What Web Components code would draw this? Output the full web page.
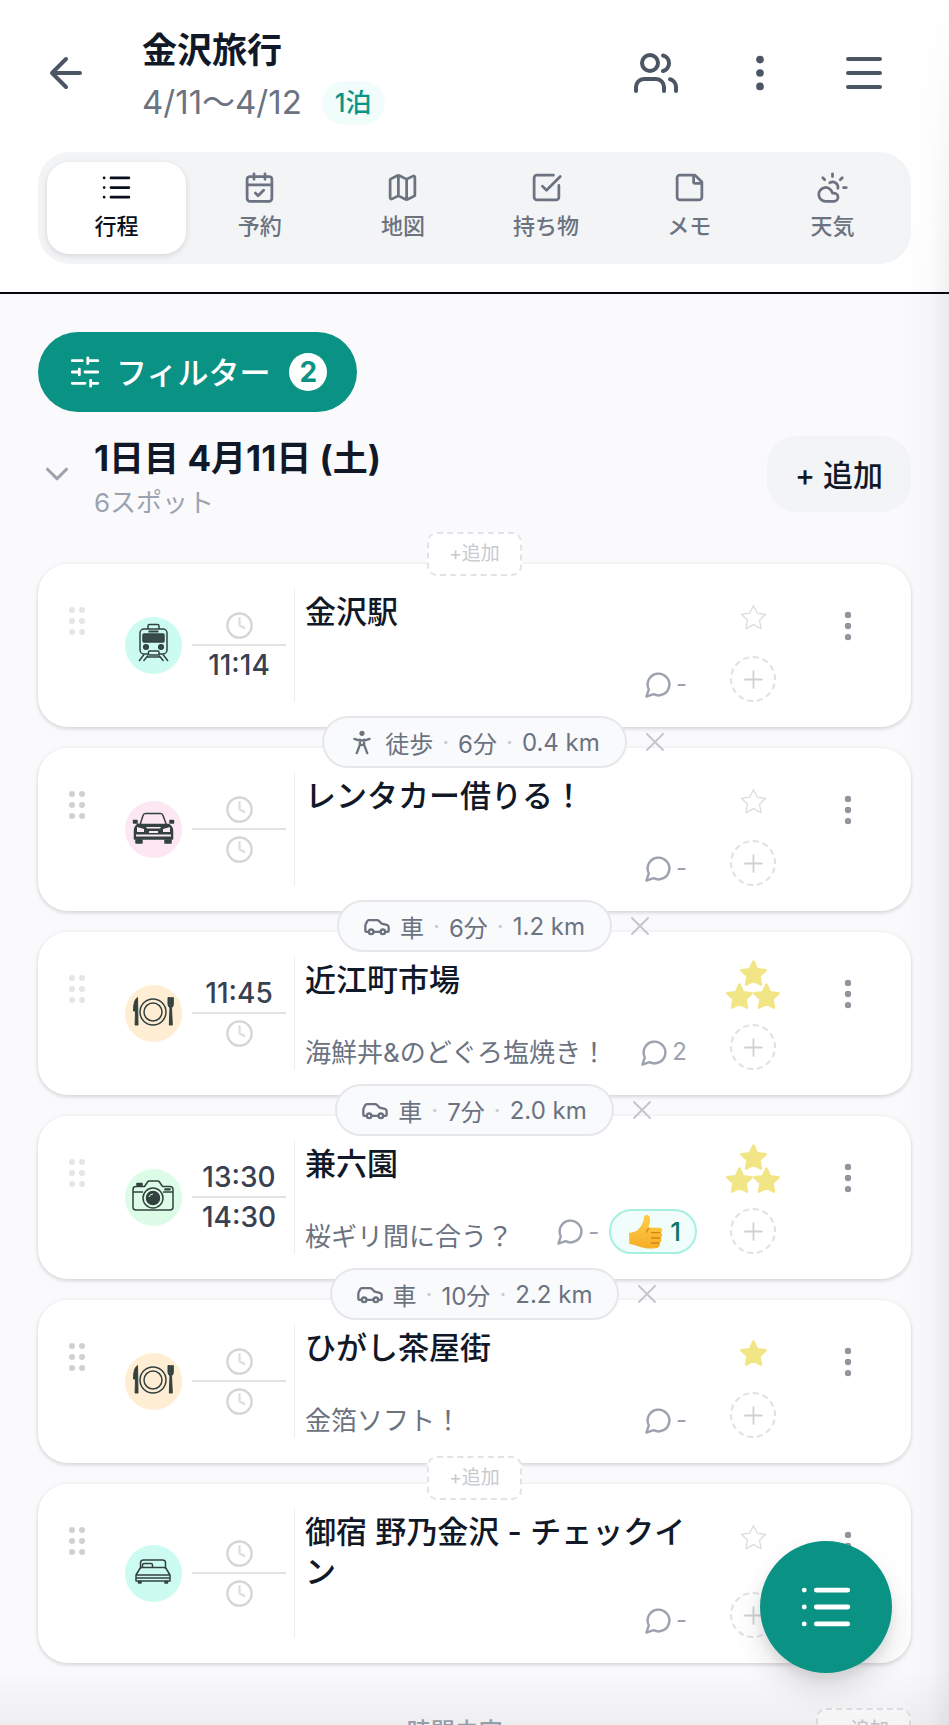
<!DOCTYPE html>
<html lang="ja">
<head>
<meta charset="utf-8">
<meta name="viewport" content="width=device-width, initial-scale=1">
<title>金沢旅行</title>
<style>
  html, body {
    margin: 0;
    height: 100%;
    overflow: hidden;
  }
  body {
    background: #fafafc;
    color: #111827;
    font-family: Inter, "Noto Sans CJK JP", sans-serif;
  }
</style>
</head>
<body>
<trip-app></trip-app>

<script>
const ICONS = {
  back: '<path d="m12 19-7-7 7-7M19 12H5"/>',
  more: '<g fill="currentColor" stroke="none"><circle cx="12" cy="5" r="2"/><circle cx="12" cy="12" r="2"/><circle cx="12" cy="19" r="2"/></g>',
  menu: '<path d="M4 5h16M4 12h16M4 19h16"/>',
  list: '<path d="M3 5h.01M3 12h.01M3 19h.01M8 5h13M8 12h13M8 19h13"/>',
  calendar: '<path d="M8 2v4M16 2v4M3 10h18m-12 6 2 2 4-4"/><rect x="3" y="4" width="18" height="18" rx="2"/>',
  map: '<path d="M14.1 5.55a2 2 0 0 0 1.8 0l3.65-1.83A1 1 0 0 1 21 4.62v12.76a1 1 0 0 1-.55.9l-4.55 2.27a2 2 0 0 1-1.8 0l-4.2-2.1a2 2 0 0 0-1.8 0l-3.65 1.83A1 1 0 0 1 3 19.38V6.62a1 1 0 0 1 .55-.9L8.1 3.45a2 2 0 0 1 1.8 0zM15 5.76v15M9 3.24v15"/>',
  check: '<path d="M21 10.5V19a2 2 0 0 1-2 2H5a2 2 0 0 1-2-2V5a2 2 0 0 1 2-2h12M9 11l3 3L22 4"/>',
  memo: '<path d="M16 3H5a2 2 0 0 0-2 2v14a2 2 0 0 0 2 2h14a2 2 0 0 0 2-2V8ZM15 3v5a1 1 0 0 0 1 1h5"/>',
  weather: '<path d="M12 2v2M4.93 4.93l1.41 1.41M20 12h2M19.07 4.93l-1.41 1.41M15.95 12.65a4 4 0 0 0-5.93-4.13M13 22H7a5 5 0 1 1 4.9-6H13a3 3 0 0 1 0 6Z"/>',
  filter: '<path d="M21 4h-7M10 4H3M21 12h-9M8 12H3M21 20h-5M12 20H3M14 2v4M8 10v4M16 18v4"/>',
  chevron: '<path d="m6 9 6 6 6-6"/>',
  clock: '<circle cx="12" cy="12" r="10"/><path d="M12 6v6l4 2" opacity=".75"/>',
  comment: '<path d="M7.9 20A9 9 0 1 0 4 16.1L2 22Z"/>',
  plus: '<path d="M5 12h14M12 5v14"/>',
  close: '<path d="M18 6 6 18M6 6l12 12"/>',
  walk: '<circle cx="12" cy="4.6" r="2.2" fill="currentColor" stroke="none"/><path d="M5.5 9.3c4 1.7 9 1.7 13 0M10.2 10v4.5L7.5 21.5M13.8 10v4.5l2.7 7M10.2 14.5h3.6"/>',
  car: '<path d="M19 17h2c.6 0 1-.4 1-1v-3c0-.9-.7-1.7-1.5-1.9C18.7 10.6 16 10 16 10s-1.3-1.4-2.2-2.3c-.5-.4-1.1-.7-1.8-.7H5c-.6 0-1.1.4-1.4.9l-1.4 2.9A3.7 3.7 0 0 0 2 12v4c0 .6.4 1 1 1h2M9 17h6"/><circle cx="7" cy="17" r="2"/><circle cx="17" cy="17" r="2"/>',
};

const icon = (name, size, stroke = 2) =>
  `<svg width="${size}" height="${size}" viewBox="0 0 24 24" fill="none" stroke="currentColor" stroke-width="${stroke}" stroke-linecap="round" stroke-linejoin="round" aria-hidden="true">${ICONS[name]}</svg>`;

const STAR = `
  <svg width="27" height="27" viewBox="1 1 22 22" fill="none" stroke="currentColor" stroke-linejoin="round" aria-hidden="true">
    <path d="m12 2.2 3 6.3 6.9.9-5 4.8 1.2 6.9L12 17.8l-6.1 3.3 1.2-6.9-5-4.8 6.9-.9z"/>
  </svg>`;

const MEMBERS = `
  <svg width="44" height="40" viewBox="0 0 44 40" fill="none" stroke="currentColor" stroke-width="4" stroke-linecap="round" aria-hidden="true">
    <circle cx="16" cy="10" r="8"/>
    <path d="M2 38v-4a8 8 0 0 1 8-8h12a8 8 0 0 1 8 8v4M29 2.5a8 8 0 0 1 0 15.5M36 26.3a8 8 0 0 1 6 7.7v4"/>
  </svg>`;

const THUMB = `
  <svg width="36" height="36" viewBox="0 0 36 36" role="img" aria-label="いいね">
    <defs><linearGradient id="skin" x1="0" y1="0" x2="0" y2="1"><stop offset="0" stop-color="#fdcf4b"/><stop offset="1" stop-color="#f6ae26"/></linearGradient></defs>
    <path fill="url(#skin)" d="M2 19c3-.8 6.5-1 8.5-2.8C13.5 13.5 16.5 9 17 3.5c.2-2.2 1.8-3.2 3.600-2.500 2.600 1 2.900 4.300 2.300 7.300-.4 2-1 3.700-1.400 5.200l11 .2c2.300.1 3 2 2.500 3.300-.3.800-.8 1.300-1.500 1.600 1.600.7 2 2.100 1.600 3.400-.3 1-.9 1.600-1.800 2 1.100.7 1.400 1.900 1 3.100-.4 1-1 1.600-2 1.800.7.7.8 1.700.5 2.500-.7 1.900-2.300 2.600-4.500 2.900-5 .5-9.900.4-14-1-4.500-1.300-8.300-3-12-3.300z"/>
    <path d="M33 18.700h-8.500M33 24h-8.500M32 29h-7.500M22 14.500c-1.500.8-2.500 2-2.300 3.700" fill="none" stroke="#d98212" stroke-width="1.3" stroke-linecap="round"/>
  </svg>`;

// Category pictures, drawn on the 57px disc
const CATEGORY = {
  train: { color: "#cbfbf1", art: `
    <rect x="15" y="12" width="27" height="25" rx="4"/>
    <path d="M23 12V9q0-1.500 1.500-1.500h8Q34 7.500 34 9v3M19 37.500l-5 6.500M23 38.500l-4.500 5.500M38 37.500l5 6.500M34 38.500l4.500 5.500M22 40h13"/>
    <path d="M23.500 14.500h10" stroke-width="1.8"/>
    <rect x="18" y="17" width="21" height="8" rx="1" fill="#374a4a"/>
    <rect x="23.5" y="34" width="10.5" height="4" rx="1" fill="#cbfbf1"/>
    <circle cx="21" cy="30" r="2.3" fill="#374a4a"/><circle cx="36" cy="30" r="2.3" fill="#374a4a"/>` },
  car: { color: "#fce7f3", art: `
    <path d="M15 24l3-9.500q.7-2 2.500-2h15q1.800 0 2.500 2L41.500 24"/>
    <path fill="#33423f" d="M13 23.500h31q3.500 2.500 3.500 6V38h-38v-8.500q0-4 3.500-6.500zM8.500 19.500h3.500v2.500H8.500zM45 19.500h3.500v2.500H45z"/>
    <path fill="#33423f" d="M11 39h6v3h-6zM40 39h6v3h-6z"/>
    <path fill="#fce7f3" stroke="none" d="M12 26l7 2v3h-7zM45 26l-7 2v3h7zM11 33.500h35v2H11zM24 30h9v2h-9zM21 26h15l-1 1.500H22z"/>` },
  food: { color: "#ffedd4", art: `
    <circle cx="28" cy="27" r="13"/><circle cx="28" cy="27" r="9"/>
    <path fill="#33423f" stroke-width="1" d="M12.500 12.500c-3 2-4 7-4 13.500h2l-.4 14h2.900zM43 12.500v7q0 2.500 2 3l-.7 17.500h3L46.500 22.500q1.800-.5 1.800-3v-7h-.8v7h-1v-7h-.9v7h-1v-7z"/>` },
  camera: { color: "#dcfce7", art: `
    <path d="M11 17.500h8.500l3-4.500q.6-1 2-1h8q1.400 0 2 1l3 4.500H45q3 0 3 3V38q0 3-3 3H11q-3 0-3-3V20.500q0-3 3-3zM8.500 23H18M38 23h9.500"/>
    <path fill="#33423f" d="M12 14.500h5v2h-5zM40 20h5v.8h-5z"/>
    <circle cx="28" cy="29" r="10" fill="#dcfce7"/><circle cx="28" cy="29" r="6.5" fill="#33423f"/>
    <path d="M24 28q1-3 4-3" stroke="#dcfce7" stroke-width="1"/>` },
  bed: { color: "#cbfbf1", art: `
    <path d="M15.500 24v-6q0-3 3-3h19q3 0 3 3v6M15.500 22.500 11 30h34l-4.500-7.500zM11 30v6h34v-6M11 33h34M17.500 22.500V20q0-1.500 1.500-1.500h7q1.500 0 1.500 1.500v2.500"/>
    <path fill="#33423f" d="M13.500 36.500h2.500v1.500h-2.500zM40 36.500h2.500v1.500H40z"/>` },
};

const BASE = `
  * { box-sizing: border-box; }
  svg { display: block; flex: none; }
  button {
    margin: 0;
    padding: 0;
    border: 0;
    background: none;
    color: inherit;
    font: inherit;
    cursor: pointer;
  }
`;

class IconButton extends HTMLElement {
  connectedCallback() {
    const name = this.getAttribute("icon");
    const picture = name === "members" ? MEMBERS : icon(name, this.getAttribute("size") || 48);
    this.attachShadow({ mode: "open" }).innerHTML = `
      <style>${BASE}
        :host { display: block; color: #4b5563; }
        button {
          display: grid;
          place-items: center;
          width: 100%;
          height: 56px;
        }
      </style>
      <button type="button" aria-label="${this.getAttribute("label")}">${picture}</button>
    `;
  }
}
customElements.define("icon-button", IconButton);

class TripTabs extends HTMLElement {
  connectedCallback() {
    const tabs = [
      ["list", "行程"],
      ["calendar", "予約"],
      ["map", "地図"],
      ["check", "持ち物"],
      ["memo", "メモ"],
      ["weather", "天気"],
    ];
    this.attachShadow({ mode: "open" }).innerHTML = `
      <style>${BASE}
        :host { display: block; }
        nav {
          display: flex;
          gap: 4px;
          padding: 10px 9px;
          border-radius: 32px;
          background: #f3f4f6;
        }
        button {
          flex: 1 1 0;
          display: flex;
          flex-direction: column;
          align-items: center;
          gap: 6px;
          height: 92px;
          padding-top: 9px;
          border-radius: 22px;
          color: #6b7280;
          font-size: 22px;
          font-weight: 500;
          line-height: 32px;
        }
        button[aria-current] {
          background: #fff;
          color: #0a0f1d;
          box-shadow: 0 2px 6px rgba(0, 0, 0, .12);
        }
      </style>
      <nav>
        ${tabs.map(([name, label], i) => `
          <button type="button" ${i === 0 ? 'aria-current="page"' : ""}>${icon(name, 33)}<span>${label}</span></button>
        `).join("")}
      </nav>
    `;
  }
}
customElements.define("trip-tabs", TripTabs);

class TripHeader extends HTMLElement {
  connectedCallback() {
    this.attachShadow({ mode: "open" }).innerHTML = `
      <style>${BASE}
        :host {
          display: block;
          padding: 20px 38px 28px;
          background: #fff;
          border-bottom: 2px solid #05070c;
        }
        .bar {
          display: flex;
          align-items: center;
          margin-bottom: 27px;
        }
        .back { width: 56px; margin-right: 48px; }
        .name { flex: 1; }
        h1 {
          margin: 0;
          font-size: 35px;
          font-weight: 700;
          line-height: 60px;
        }
        .dates {
          display: flex;
          align-items: center;
          gap: 20px;
          height: 45px;
          color: #6b7280;
          font-size: 33px;
          line-height: 45px;
        }
        .nights {
          padding: 0 13px;
          border-radius: 22px;
          background: #f0fdfa;
          color: #0d9488;
          font-size: 26px;
          font-weight: 500;
          line-height: 44px;
        }
        .actions { display: flex; gap: 10px; }
        .actions icon-button { width: 94px; }
      </style>
      <div class="bar">
        <icon-button class="back" icon="back" label="戻る"></icon-button>
        <div class="name">
          <h1><slot></slot></h1>
          <div class="dates"><span>4/11〜4/12</span><span class="nights">1泊</span></div>
        </div>
        <div class="actions">
          <icon-button icon="members" label="メンバー"></icon-button>
          <icon-button icon="more" size="46" label="その他"></icon-button>
          <icon-button icon="menu" label="メニュー"></icon-button>
        </div>
      </div>
      <trip-tabs></trip-tabs>
    `;
  }
}
customElements.define("trip-header", TripHeader);

class FilterButton extends HTMLElement {
  connectedCallback() {
    this.attachShadow({ mode: "open" }).innerHTML = `
      <style>${BASE}
        :host { display: flex; }
        button {
          display: flex;
          align-items: center;
          height: 80px;
          padding: 0 30px;
          border-radius: 40px;
          background: #0a9384;
          color: #fff;
          font-size: 31px;
          font-weight: 500;
        }
        .label {
          margin: 0 19px 0 14px;
          padding-bottom: 3px;
        }
        .count {
          width: 38px;
          border-radius: 50%;
          background: #fff;
          color: #0a9384;
          font-size: 28px;
          font-weight: 700;
          line-height: 38px;
        }
      </style>
      <button type="button">
        ${icon("filter", 34)}
        <span class="label"><slot></slot></span>
        <span class="count">${this.getAttribute("count")}</span>
      </button>
    `;
  }
}
customElements.define("filter-button", FilterButton);

class DayHeading extends HTMLElement {
  connectedCallback() {
    this.attachShadow({ mode: "open" }).innerHTML = `
      <style>${BASE}
        :host {
          display: flex;
          align-items: center;
          margin: 15px 0 22px;
        }
        .toggle { width: 38px; margin-right: 18px; color: #9ca3af; }
        .text { flex: 1; padding-top: 4px; }
        h2 {
          margin: 0;
          font-size: 35px;
          font-weight: 700;
          line-height: 54px;
        }
        p {
          margin: 0;
          color: #9ca3af;
          font-size: 26px;
          line-height: 36px;
        }
        .add {
          height: 76px;
          padding: 0 28px 2px;
          border-radius: 30px;
          background: #f3f4f6;
          font-size: 30px;
          font-weight: 500;
        }
      </style>
      <button class="toggle" type="button" aria-label="折りたたむ">${icon("chevron", 38)}</button>
      <div class="text">
        <h2><slot></slot></h2>
        <p>${this.getAttribute("count")}スポット</p>
      </div>
      <button class="add" type="button">+ 追加</button>
    `;
  }
}
customElements.define("day-heading", DayHeading);

class AddHere extends HTMLElement {
  connectedCallback() {
    this.attachShadow({ mode: "open" }).innerHTML = `
      <style>${BASE}
        :host { display: block; }
        button {
          height: 44px;
          padding: 0 20px;
          border: 2px dashed #e2e3e6;
          border-radius: 10px;
          background: #fff;
          color: #c8cacf;
          font-size: 19px;
          line-height: 40px;
        }
      </style>
      <button type="button">+追加</button>
    `;
  }
}
customElements.define("add-here", AddHere);

// The strip between two cards; what it holds overlaps both of them
class SpotLink extends HTMLElement {
  connectedCallback() {
    const mode = this.getAttribute("mode");
    const dot = '<span class="dot">·</span>';
    const pill = `
      <div class="move">
        <button class="pill" type="button">
          ${mode === "徒歩" ? icon("walk", 28) : icon("car", 28)}
          <span>${mode}</span>${dot}<span>${this.getAttribute("time")}</span>${dot}<span>${this.getAttribute("distance")}</span>
        </button>
        <button class="close" type="button" aria-label="削除">${icon("close", 32, 1.5)}</button>
      </div>`;
    this.attachShadow({ mode: "open" }).innerHTML = `
      <style>${BASE}
        :host {
          display: flex;
          align-items: center;
          justify-content: center;
          box-sizing: border-box;
          height: 21px;
        }
        :host(:not(:first-of-type)) { padding-top: 9px; }
        .move, add-here { position: relative; z-index: 1; flex: none; }
        .pill {
          display: flex;
          align-items: center;
          gap: 9px;
          height: 52px;
          padding: 0 25px 0 24px;
          border: 2px solid #e5e7eb;
          border-radius: 26px;
          background: #f9fafc;
          color: #6b7280;
          font-size: 24px;
        }
        .dot { color: #c8cbd1; }
        .close {
          position: absolute;
          top: 10px;
          left: 100%;
          margin-left: 12px;
          color: #c3c6cb;
        }
      </style>
      ${mode ? pill : "<add-here></add-here>"}
    `;
  }
}
customElements.define("spot-link", SpotLink);

class SpotCard extends HTMLElement {
  connectedCallback() {
    const { color, art } = CATEGORY[this.getAttribute("category")];
    const stars = Number(this.getAttribute("stars") || 0);
    const likes = this.getAttribute("likes");
    const time = (name) => {
      const value = this.getAttribute(name);
      return `<button type="button" aria-label="${value || "時刻を設定"}">${value || icon("clock", 29)}</button>`;
    };
    this.attachShadow({ mode: "open" }).innerHTML = `
      <style>${BASE}
        :host {
          display: flex;
          min-height: 163px;
          padding: 24px 24px 25px 0;
          border-radius: 30px;
          background: #fff;
          box-shadow: 0 2px 4px rgba(0, 0, 0, .13), 0 0 4px rgba(0, 0, 0, .05);
        }
        .drag {
          display: grid;
          grid-template-columns: repeat(2, 6px);
          justify-content: center;
          align-content: start;
          gap: 5px 4px;
          width: 78px;
          padding-top: 19px;
          color: #cfd0d4;
        }
        :host([fixed]) .drag { color: #e4e5e7; }
        .drag i {
          height: 6px;
          border-radius: 50%;
          background: currentColor;
        }
        .disc {
          align-self: center;
          width: 57px;
          margin: 0 10px 0 9px;
          border-radius: 50%;
          background: ${color};
        }
        .times {
          align-self: center;
          width: 94px;
          color: #374151;
          font-size: 28px;
          font-weight: 500;
        }
        .times button {
          display: grid;
          place-items: center;
          width: 100%;
          height: 39px;
          line-height: 39px;
        }
        .times button:first-child {
          height: 41px;
          padding-top: 2px;
          border-bottom: 2px solid #e1e3e6;
          line-height: 37px;
        }
        .times svg { color: #d3d5d9; }
        .body {
          flex: 1;
          min-width: 0;
          display: flex;
          flex-direction: column;
          justify-content: space-between;
          margin-left: 8px;
          padding-left: 10px;
          border-left: 1px solid #eceef0;
        }
        h3 {
          margin: 0;
          padding-top: 4px;
          font-size: 31px;
          font-weight: 500;
          line-height: 40px;
        }
        .foot {
          display: flex;
          align-items: flex-end;
          min-height: 46px;
        }
        .note {
          flex: 1;
          color: #6b7280;
          font-size: 26px;
          line-height: 34px;
          white-space: nowrap;
        }
        .talk { display: flex; align-items: center; }
        .comment {
          display: flex;
          align-items: center;
          gap: 3px;
          padding-right: 10px;
          color: #9ca3af;
          font-size: 24px;
          line-height: 36px;
        }
        .like {
          display: flex;
          align-items: center;
          gap: 7px;
          height: 45px;
          padding: 0 14px 0 16px;
          border: 2px solid #a7efe0;
          border-radius: 23px;
          background: #f0fdfa;
          color: #0f766e;
          font-size: 26px;
          font-weight: 500;
        }
        .rate {
          display: flex;
          flex-direction: column;
          align-items: center;
          justify-content: space-between;
          width: 112px;
        }
        .stars {
          display: flex;
          flex-wrap: wrap;
          justify-content: center;
          align-content: center;
          width: 54px;
          height: 58px;
          color: #d9dbdf;
        }
        .stars.on { color: #f2e585; }
        .stars.on svg {
          margin: -2px 0;
          fill: currentColor;
          stroke-width: 2;
        }
        .stars.on svg:first-child { margin: -2px 13px; }
        .react {
          display: grid;
          place-items: center;
          width: 46px;
          height: 46px;
          border: 2px dashed #dfe1e4;
          border-radius: 50%;
          color: #cfd1d5;
        }
        .more {
          align-self: flex-start;
          display: grid;
          place-items: center;
          width: 78px;
          padding-top: 19px;
          color: #9295a0;
        }
      </style>
      <button class="drag" type="button" aria-label="並べ替え"><i></i><i></i><i></i><i></i><i></i><i></i></button>
      <svg class="disc" width="57" height="57" viewBox="0 0 57 57" fill="none" stroke="#33423f" stroke-width="1.5" stroke-linejoin="round" aria-hidden="true">${art}</svg>
      <div class="times">${time("from")}${time("to")}</div>
      <div class="body">
        <h3><slot></slot></h3>
        <div class="foot">
          <span class="note">${this.getAttribute("note") || ""}</span>
          <div class="talk">
            <button class="comment" type="button">${icon("comment", 29)}<span>${this.getAttribute("comments") || "-"}</span></button>
            ${likes ? `<button class="like" type="button">${THUMB}<span>${likes}</span></button>` : ""}
          </div>
        </div>
      </div>
      <div class="rate">
        <button class="stars ${stars ? "on" : ""}" type="button" aria-label="行きたい度 ${stars}">${STAR.repeat(stars || 1)}</button>
        <button class="react" type="button" aria-label="リアクション">${icon("plus", 29, 1.5)}</button>
      </div>
      <button class="more" type="button" aria-label="その他">${icon("more", 38)}</button>
    `;
  }
}
customElements.define("spot-card", SpotCard);

class TripApp extends HTMLElement {
  constructor() {
    super();
    this.attachShadow({ mode: "open" }).innerHTML = `
      <style>${BASE}
        :host {
          display: block;
          height: 100vh;
          overflow: hidden;
        }
        main { padding: 38px 38px 0; }
        .unscheduled {
          display: flex;
          align-items: flex-start;
          margin-top: 45px;
          padding-left: 55px;
        }
        .unscheduled h2 {
          flex: 1;
          margin: 10px 0 0;
          color: #9ca3af;
          font-size: 24px;
          font-weight: 500;
          line-height: 28px;
          text-align: center;
        }
        .edge, .haze {
          position: fixed;
          right: 0;
          bottom: 0;
          z-index: 2;
          pointer-events: none;
        }
        .edge {
          top: 0;
          width: 48px;
          background: linear-gradient(to right, rgba(60, 60, 70, 0), rgba(60, 60, 70, .02) 60%, rgba(60, 60, 70, .08));
          mask-image: linear-gradient(to bottom, transparent, #000 300px);
        }
        .haze {
          left: 0;
          height: 56px;
          background: linear-gradient(to bottom, rgba(60, 60, 70, 0), rgba(60, 60, 70, .06));
        }
        .fab {
          position: fixed;
          right: 57px;
          bottom: 52px;
          z-index: 3;
          display: grid;
          place-items: center;
          width: 132px;
          height: 132px;
          border-radius: 50%;
          background: #0a9384;
          color: #fff;
          box-shadow: 0 16px 30px rgba(0, 0, 0, .12), 0 6px 12px rgba(0, 0, 0, .08);
        }
      </style>
      <trip-header>金沢旅行</trip-header>
      <main>
        <filter-button count="2">フィルター</filter-button>
        <day-heading count="6">1日目 4月11日 (土)</day-heading>
        <spot-link></spot-link>
        <spot-card fixed category="train" to="11:14">金沢駅</spot-card>
        <spot-link mode="徒歩" time="6分" distance="0.4 km"></spot-link>
        <spot-card category="car">レンタカー借りる！</spot-card>
        <spot-link mode="車" time="6分" distance="1.2 km"></spot-link>
        <spot-card fixed category="food" from="11:45" note="海鮮丼&amp;のどぐろ塩焼き！" comments="2" stars="3">近江町市場</spot-card>
        <spot-link mode="車" time="7分" distance="2.0 km"></spot-link>
        <spot-card fixed category="camera" from="13:30" to="14:30" note="桜ギリ間に合う？" likes="1" stars="3">兼六園</spot-card>
        <spot-link mode="車" time="10分" distance="2.2 km"></spot-link>
        <spot-card category="food" note="金箔ソフト！" stars="1">ひがし茶屋街</spot-card>
        <spot-link></spot-link>
        <spot-card category="bed">御宿 野乃金沢 - チェックイン</spot-card>
        <div class="unscheduled">
          <h2>時間未定</h2>
          <add-here></add-here>
        </div>
      </main>
      <div class="edge"></div>
      <div class="haze"></div>
      <button class="fab" type="button" aria-label="目次">${icon("list", 58)}</button>
    `;
  }
}
customElements.define("trip-app", TripApp);
</script>
</body>
</html>
